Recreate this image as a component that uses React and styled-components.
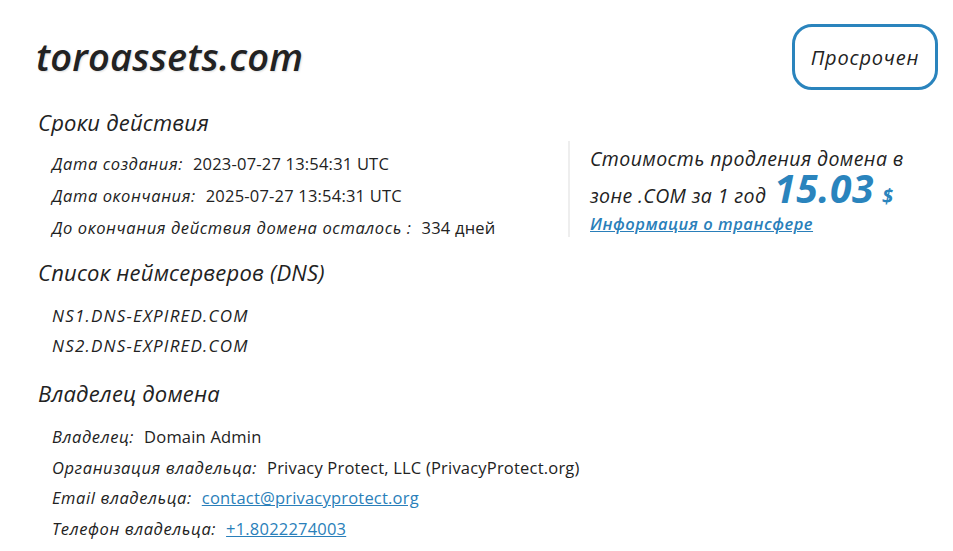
import styled, { createGlobalStyle } from "styled-components";

const GlobalStyle = createGlobalStyle`
  body {
    margin: 0;
    background: #fff;
    color: #222;
    font-family: "Open Sans", "Noto Sans", sans-serif;
  }
`;

const Page = styled.div`
  width: 953px;
  padding: 24px 15px 0 36px;
  box-sizing: border-box;
`;

const Header = styled.div`
  display: flex;
  justify-content: space-between;
  align-items: flex-start;
`;

const Title = styled.h1`
  margin: 8px 0 0 0;
  font-size: 38px;
  line-height: 48px;
  font-weight: 600;
  font-style: italic;
  letter-spacing: 0.2px;
  color: #222;
  text-shadow: 1px 1px 2px #ddd;
`;

const Badge = styled.div`
  width: 146px;
  height: 66px;
  box-sizing: border-box;
  border: 3px solid #2a84bd;
  border-radius: 20px;
  display: flex;
  align-items: center;
  justify-content: center;
  font-style: italic;
  font-size: 20px;
  letter-spacing: 0.8px;
  color: #222;
`;

const SectionTitle = styled.h2`
  margin: ${(p) => p.$top || 0}px 0 0 2px;
  font-size: 22px;
  line-height: 30px;
  font-weight: 400;
  font-style: italic;
  letter-spacing: 0.2px;
  color: #222;
`;

const Split = styled.div`
  display: flex;
  margin-top: 10px;
`;

const Rows = styled.div`
  width: 514px;
  padding-left: 16px;
  margin-top: ${(p) => p.$top || 0}px;
  display: flex;
  flex-direction: column;
`;

const Row = styled.div`
  height: ${(p) => p.$h || 32}px;
  display: flex;
  align-items: center;
  font-size: 16.5px;
  white-space: nowrap;
`;

const Label = styled.span`
  font-style: italic;
  letter-spacing: 0.6px;
  color: #222;
  margin-right: 10px;
`;

const Value = styled.span`
  font-family: "Open Sans", "Noto Sans", sans-serif;
  letter-spacing: 0.2px;
  color: #222;
`;

const Link = styled.a`
  font-family: "Open Sans", "Noto Sans", sans-serif;
  letter-spacing: 0.2px;
  color: #2a7fba;
  text-decoration: underline;
`;

const Price = styled.div`
  border-left: 2px solid #eee;
  margin-left: 2px;
  padding-left: 20px;
  height: 96px;
  margin-top: -6px;
`;

const PriceText = styled.div`
  font-style: italic;
  font-size: 19.5px;
  letter-spacing: 0.4px;
  line-height: 35px;
  margin-top: ${(p) => p.$top || 0}px;
  color: #222;
  white-space: nowrap;
`;

const Amount = styled.span`
  display: inline-block;
  font-size: 39px;
  line-height: 32px;
  font-weight: 700;
  color: #2a84bd;
  margin-left: 8px;
  letter-spacing: 0.5px;
`;

const Dollar = styled.span`
  font-size: 20px;
  line-height: 20px;
  font-weight: 700;
  color: #2a84bd;
  margin-left: 8px;
`;

const Transfer = styled.a`
  display: block;
  font-style: italic;
  font-weight: 600;
  font-size: 16.5px;
  letter-spacing: 0.5px;
  color: #2a7fba;
  text-decoration: underline;
  margin-top: -1px;
`;

const NsList = styled.div`
  margin-top: 13px;
  padding-left: 16px;
  display: flex;
  flex-direction: column;
`;

const Ns = styled.div`
  height: 30px;
  display: flex;
  align-items: center;
  font-style: italic;
  font-size: 17px;
  letter-spacing: 1.2px;
  color: #222;
`;

const dates = [
  ["Дата создания:", "2023-07-27 13:54:31 UTC"],
  ["Дата окончания:", "2025-07-27 13:54:31 UTC"],
  ["До окончания действия домена осталось :", "334 дней"],
];

const App = () => {
  return (
    <Page>
      <GlobalStyle />
      <Header>
        <Title>toroassets.com</Title>
        <Badge>Просрочен</Badge>
      </Header>
      <SectionTitle $top={17}>Сроки действия</SectionTitle>
      <Split>
        <Rows>
          {dates.map(([l, v]) => (
            <Row key={l}>
              <Label>{l}</Label>
              <Value>{v}</Value>
            </Row>
          ))}
        </Rows>
        <Price>
          <PriceText>Стоимость продления домена в</PriceText>
          <PriceText $top={-4}>
            зоне .COM за 1 год
            <Amount>15.03</Amount>
            <Dollar>$</Dollar>
          </PriceText>
          <Transfer href="#">Информация о трансфере</Transfer>
        </Price>
      </Split>
      <SectionTitle $top={14}>Список неймсерверов (DNS)</SectionTitle>
      <NsList>
        <Ns>NS1.DNS-EXPIRED.COM</Ns>
        <Ns>NS2.DNS-EXPIRED.COM</Ns>
      </NsList>
      <SectionTitle $top={18}>Владелец домена</SectionTitle>
      <Rows $top={13}>
        <Row $h={30.7}>
          <Label>Владелец:</Label>
          <Value>Domain Admin</Value>
        </Row>
        <Row $h={30.7}>
          <Label>Организация владельца:</Label>
          <Value>Privacy Protect, LLC (PrivacyProtect.org)</Value>
        </Row>
        <Row $h={30.7}>
          <Label>Email владельца:</Label>
          <Link href="#">contact@privacyprotect.org</Link>
        </Row>
        <Row $h={30.7}>
          <Label>Телефон владельца:</Label>
          <Link href="#">+1.8022274003</Link>
        </Row>
      </Rows>
    </Page>
  );
};

export default App;
